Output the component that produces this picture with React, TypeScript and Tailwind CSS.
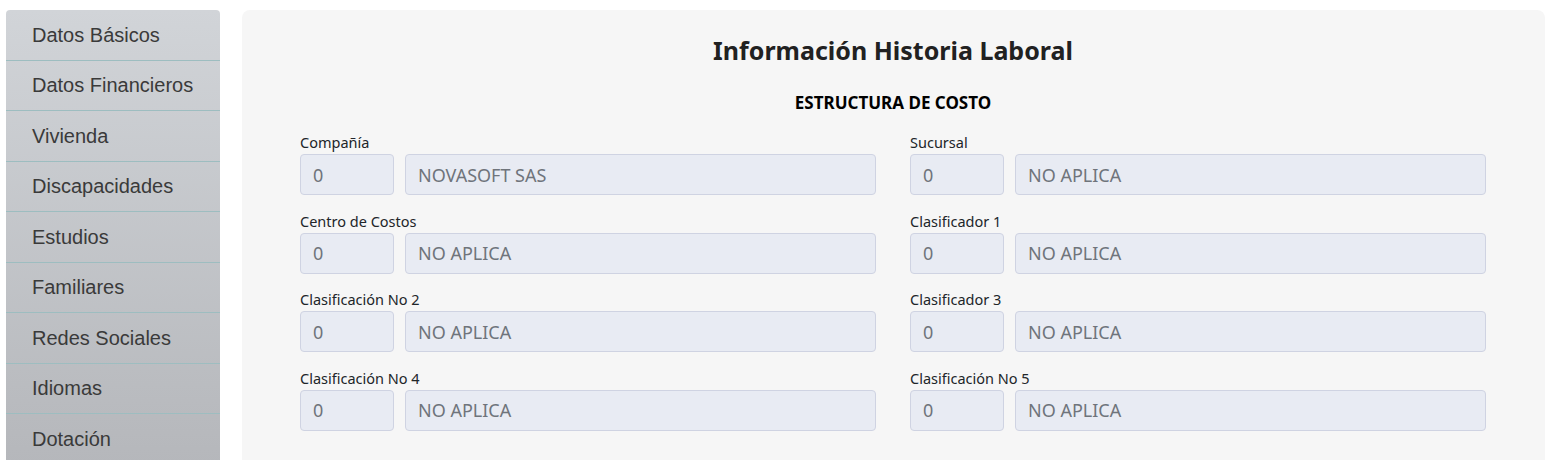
const menu = [
  "Datos Básicos",
  "Datos Financieros",
  "Vivienda",
  "Discapacidades",
  "Estudios",
  "Familiares",
  "Redes Sociales",
  "Idiomas",
  "Dotación",
];

const fields = [
  { label: "Compañía", code: "0", name: "NOVASOFT SAS" },
  { label: "Sucursal", code: "0", name: "NO APLICA" },
  { label: "Centro de Costos", code: "0", name: "NO APLICA" },
  { label: "Clasificador 1", code: "0", name: "NO APLICA" },
  { label: "Clasificación No 2", code: "0", name: "NO APLICA" },
  { label: "Clasificador 3", code: "0", name: "NO APLICA" },
  { label: "Clasificación No 4", code: "0", name: "NO APLICA" },
  { label: "Clasificación No 5", code: "0", name: "NO APLICA" },
];

function Field({ label, code, name }: { label: string; code: string; name: string }) {
  return (
    <div>
      <label className="block h-[23px] text-[14.5px] leading-[22px] text-[#212529]">{label}</label>
      <div className="grid grid-cols-[94px_1fr] gap-[11px]">
        <input
          readOnly
          value={code}
          className="h-[41px] rounded-[4px] border border-[#cfd3e2] bg-[#e8ebf3] px-3 text-[18px] text-[#6f747b] outline-none"
        />
        <input
          readOnly
          value={name}
          className="h-[41px] rounded-[4px] border border-[#cfd3e2] bg-[#e8ebf3] px-3 text-[18px] text-[#6f747b] outline-none"
        />
      </div>
    </div>
  );
}

export default function App() {
  return (
    <div className="flex h-[460px] items-start gap-[22px] overflow-hidden bg-white pl-[6px] pr-[4px] pt-[10px]">
      <nav className="w-[214px] shrink-0 overflow-hidden rounded-t-[4px] bg-gradient-to-b from-[#d1d4d8] to-[#b5b7bb] font-['Liberation_Sans',Arial,sans-serif]">
        {menu.map((item) => (
          <div
            key={item}
            className="flex h-[50.5px] items-center border-b border-[#9dbdc0] pl-[26px] text-[20px] text-[#3a3a3a]"
          >
            {item}
          </div>
        ))}
      </nav>

      <main className="min-h-[470px] flex-1 rounded-[8px] bg-[#f6f6f6] pl-[58px] pr-[59px] pt-[24px] font-['Noto_Sans',sans-serif]">
        <h1 className="text-center text-[25px] font-bold leading-[32px] text-[#212121]">
          Información Historia Laboral
        </h1>
        <h2 className="mt-[26px] text-center text-[17px] font-bold leading-[22px] text-black">
          ESTRUCTURA DE COSTO
        </h2>
        <div className="mt-[17px] grid grid-cols-2 gap-x-[34px] gap-y-[14.5px]">
          {fields.map((f) => (
            <Field key={f.label} {...f} />
          ))}
        </div>
      </main>
    </div>
  );
}
